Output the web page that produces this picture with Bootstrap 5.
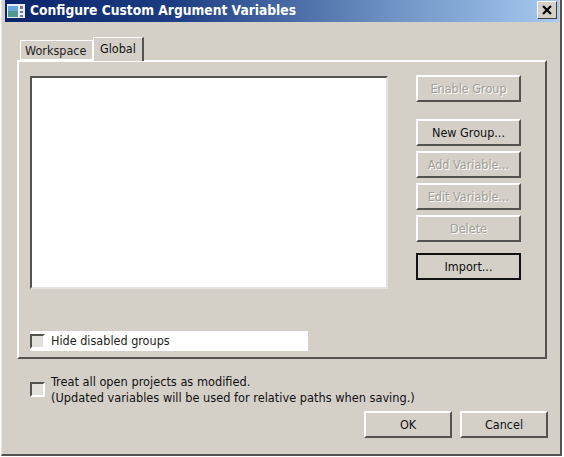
<!DOCTYPE html>
<html lang="en"><head><meta charset="utf-8"><title>Configure Custom Argument Variables</title>
<link rel="stylesheet" href="https://cdn.jsdelivr.net/npm/bootstrap@5.3.0/dist/css/bootstrap.min.css">
<style>
html,body{margin:0;height:457px;overflow:hidden;background:#fff}
body{font-family:"DejaVu Sans Condensed","DejaVu Sans",sans-serif;font-size:12.5px;color:#111;line-height:16px}
.win{width:561px;height:456px;margin-left:1px;background:#d4d0c8;border-left:1px solid #e8e6e0;border-right:2px solid #55534f;border-bottom:2px solid #55534f;padding:0 1px 0 3px}
.ttl{height:22px;background:linear-gradient(90deg,#0a246a 0%,#1c3d82 30%,#6f93c4 70%,#a6caf0 100%);color:#fff;font:bold 13.7px/21px "DejaVu Sans Condensed","DejaVu Sans",sans-serif;padding-left:2px;gap:5px}
.ttl-x{width:20px;height:18px;background:#d4d0c8;border:1px solid;border-color:#fff #404040 #404040 #fff;margin:1px 2px 0 auto}
.tabrow{margin:15px 0 0 15px;padding:0;height:23px;border:0;align-items:flex-end}
.wintab{background:#d4d0c8;border:1px solid;border-color:#fff #55534f transparent #fff;border-bottom:0;border-right-color:#fff}
.wintab.t1{width:73px;height:20px;padding:2px 0 0 4px;border-bottom:1px solid #fff;box-sizing:border-box;color:#222}
.wintab.t2{width:51px;height:24px;padding:3px 0 0 6px;border-right:2px solid #55534f;margin-bottom:-1px;position:relative;z-index:1}
.pane{width:530px;height:299px;margin-left:12px;border:1px solid;border-color:#fff #55534f #55534f #fff;border-width:2px;padding:14px 24px 0 11px}
.lst{width:359px;height:213px;background:#fff;border:2px solid;border-color:#55534f #e4e2dc #e4e2dc #55534f}
.cols{gap:28px}
.bcol{width:105px;margin-top:-1px}
.wb{display:block;width:105px;height:27px;padding:0;border-radius:0;background:#d4d0c8;color:#111;font-size:12.5px;line-height:23px;border:2px solid;border-color:#fff #55534f #55534f #fff;text-align:center}
.wb:disabled{opacity:1;color:#a19e97;background:#d4d0c8;border-color:#fff #55534f #55534f #fff;text-shadow:1px 1px 0 #fff}
.wb.dft{border:2px solid #111;}
.bcol .m1{margin-top:17px}.bcol .m2{margin-top:5px}.bcol .m3{margin-top:11px}
.bx{width:15px;height:15px;flex:none;margin:0;border-radius:0;background:#e2e0da;border:2px solid;border-color:#55534f #fff #fff #55534f;appearance:none}
.hid{width:278px;height:20px;background:#fff;margin-top:42px;gap:6px}
.hid span{color:#222}
.trt{margin:14px 0 0 25px;gap:6px;height:33px;font-size:12.65px}
.act{gap:8px;justify-content:flex-end;margin:5px 11px 0 0}
.act .wb{width:88px}
</style></head><body>
<div class="win">
 <div class="ttl d-flex align-items-start">
  <svg width="18" height="14" viewBox="0 0 18 14" class="mt-1 flex-none"><rect width="18" height="14" fill="#e8ecf4"/><rect x="1" y="2" width="10" height="11" fill="#4f9a8c"/><rect x="1" y="2" width="10" height="5" fill="#6aa6d8"/><rect x="13" y="2" width="3" height="3" fill="#7a7a8a"/><rect x="13" y="7" width="3" height="2" fill="#7a7a8a"/><rect x="13" y="11" width="3" height="2" fill="#7a7a8a"/></svg>
  <span>Configure Custom Argument Variables</span>
  <div class="ttl-x d-flex align-items-center justify-content-center"><svg width="12" height="10" viewBox="0 0 12 10"><path d="M2 1l8 8M10 1l-8 8" stroke="#000" stroke-width="2.2" fill="none"/></svg></div>
 </div>
 <div class="nav tabrow d-flex">
  <div class="wintab t1">Workspace</div>
  <div class="wintab t2">Global</div>
 </div>
 <div class="pane">
  <div class="d-flex cols">
   <div class="lst"></div>
   <div class="bcol">
    <button class="btn wb" disabled>Enable Group</button>
    <button class="btn wb m1">New Group...</button>
    <button class="btn wb m2" disabled>Add Variable...</button>
    <button class="btn wb m2" disabled>Edit Variable...</button>
    <button class="btn wb m2" disabled>Delete</button>
    <button class="btn wb dft m3">Import...</button>
   </div>
  </div>
  <label class="hid d-flex align-items-center"><input type="checkbox" class="bx"><span>Hide disabled groups</span></label>
 </div>
 <label class="trt d-flex align-items-center"><input type="checkbox" class="bx"><span>Treat all open projects as modified.<br>(Updated variables will be used for relative paths when saving.)</span></label>
 <div class="act d-flex"><button class="btn wb">OK</button><button class="btn wb">Cancel</button></div>
</div>
</body></html>
